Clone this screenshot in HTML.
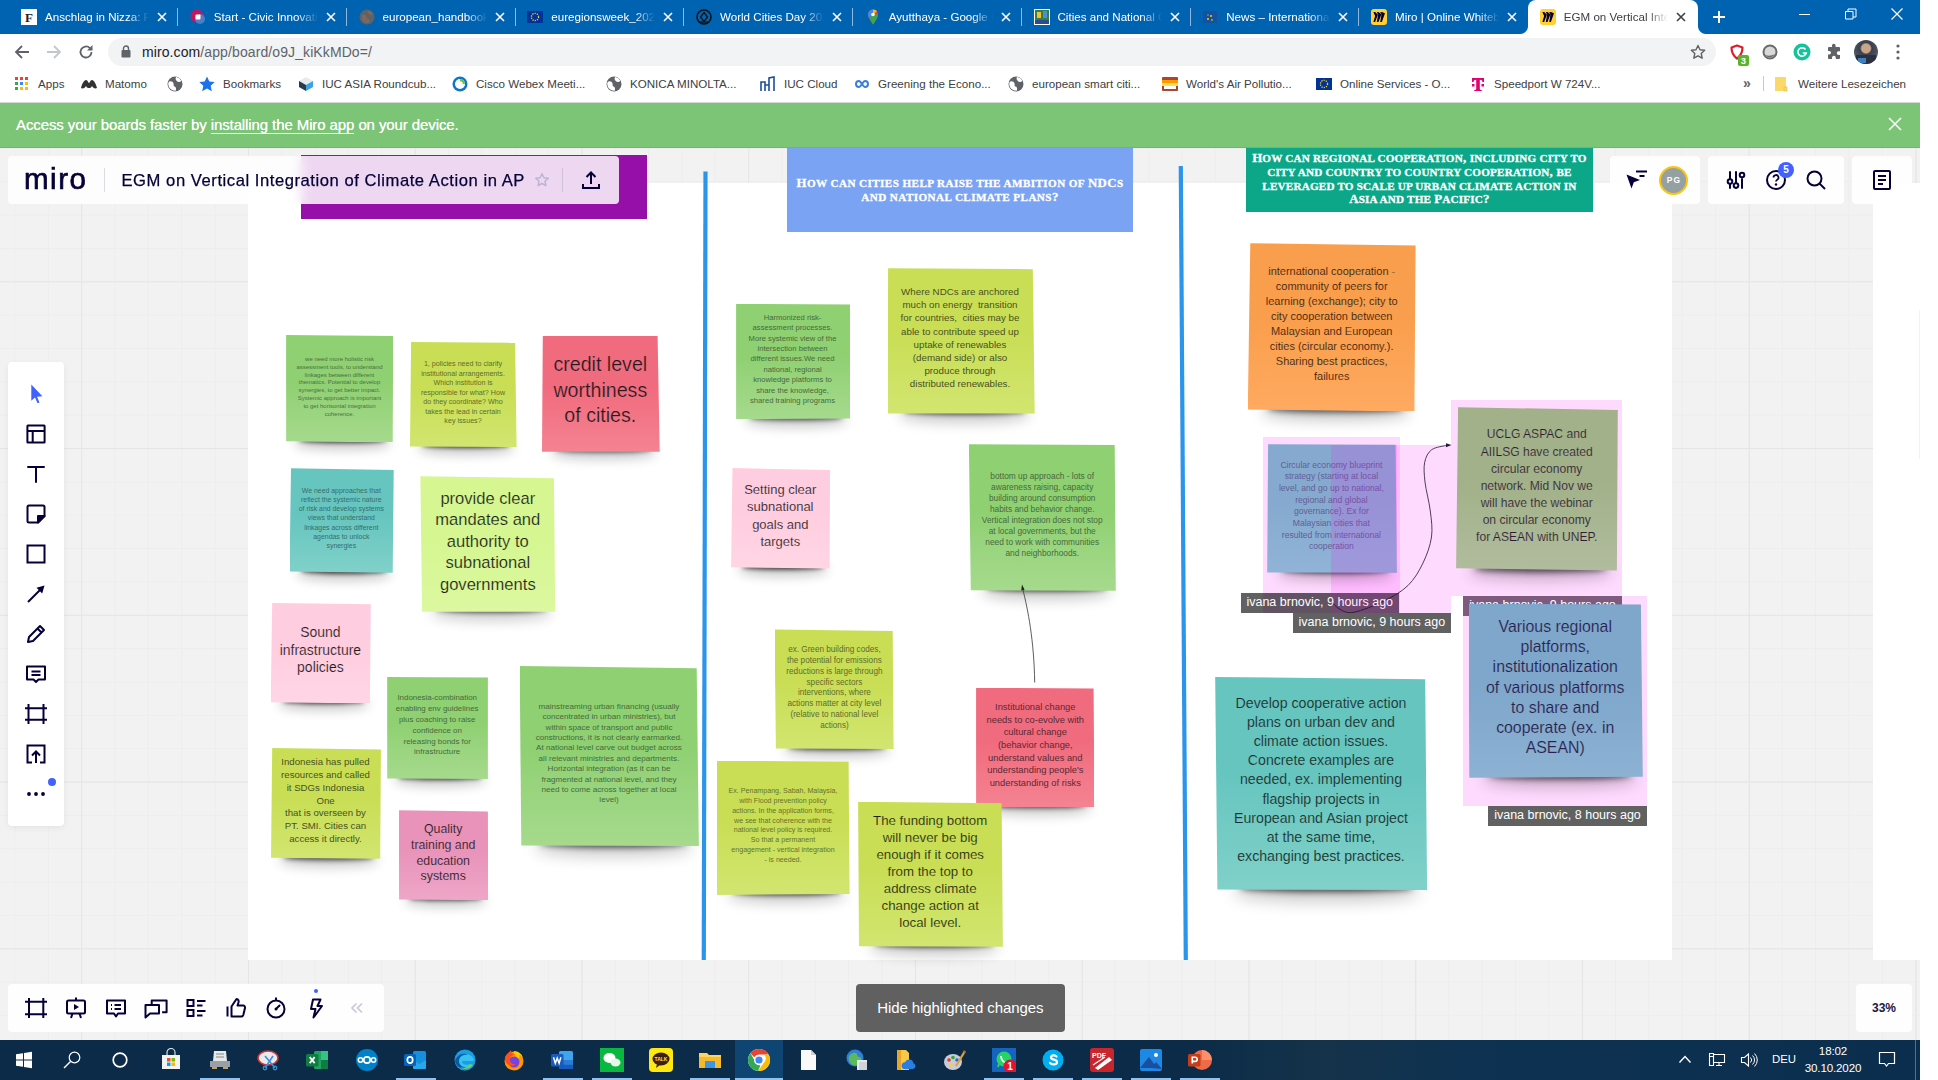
<!DOCTYPE html>
<html lang="en"><head><meta charset="utf-8"><title>EGM on Vertical Integration of Climate Action in AP</title>
<style>
*{box-sizing:border-box;margin:0;padding:0}
html,body{width:1938px;height:1080px;background:#fff;overflow:hidden}
body{font-family:"Liberation Sans",sans-serif;position:relative}
#scr{position:absolute;left:0;top:0;width:1920px;height:1080px;overflow:hidden;background:#f2f2f2}
.abs{position:absolute}
/* ---------- browser chrome ---------- */
#tabs{position:absolute;left:0;top:0;width:1920px;height:34px;background:#0063b1}
.tab{position:absolute;top:0;height:34px;width:169px;color:#fff;font-size:11.6px;line-height:34px}
.tab .ti{position:absolute;left:36px;top:0;width:104px;height:34px;overflow:hidden;white-space:nowrap;
  -webkit-mask-image:linear-gradient(90deg,#000 80%,transparent 100%);mask-image:linear-gradient(90deg,#000 80%,transparent 100%)}
.tab .fv{position:absolute;left:12px;top:9px;width:16px;height:16px}
.tab .cl{position:absolute;left:147px;top:11px;width:12px;height:12px}
.tab .sep{position:absolute;left:168px;top:8px;width:1px;height:18px;background:#8fb8dc}
.tab.act{background:#fff;color:#3c4043;border-radius:8px 8px 0 0;top:0px}
.tab.act:before,.tab.act:after{content:'';position:absolute;bottom:0;width:8px;height:8px}
.tab.act:before{left:-8px;background:radial-gradient(circle at 0 0,transparent 7.5px,#fff 8.5px)}
.tab.act:after{right:-8px;background:radial-gradient(circle at 100% 0,transparent 7.5px,#fff 8.5px)}
#tbar{position:absolute;left:0;top:34px;width:1920px;height:36px;background:#fff}
#pill{position:absolute;left:108px;top:4px;width:1608px;height:28px;border-radius:14px;background:#f1f3f4}
#url{position:absolute;left:142px;top:0;height:36px;line-height:36px;font-size:14px;color:#202124;white-space:nowrap;letter-spacing:0.1px}
#url span{color:#5f6368}
#bm{position:absolute;left:0;top:69px;width:1920px;height:34px;background:#fff;border-bottom:1px solid #d6d6d6;font-size:11.6px;color:#3c4043}
#bm .b{position:absolute;top:0;height:29px;line-height:29px;white-space:nowrap}
#bm .i{position:absolute;top:7px;width:16px;height:16px}
#banner{position:absolute;left:0;top:103px;width:1920px;height:45px;background:#7cc576;border-bottom:1px solid #6fb86a;color:#fff;font-size:15px;line-height:44px}
#banner .t{position:absolute;left:16px;top:0px;white-space:nowrap;letter-spacing:-0.1px;text-shadow:0 0 0.6px #fff}
#banner u{text-decoration:none;border-bottom:1px solid #fff;padding-bottom:0px}
/* ---------- canvas ---------- */
#cv{position:absolute;left:0;top:148px;width:1920px;height:892px;overflow:hidden;background-color:#f2f2f2;
 background-image:
  linear-gradient(90deg,#e5e5e5 1px,transparent 1px),
  linear-gradient(180deg,#e5e5e5 1px,transparent 1px),
  linear-gradient(90deg,#ededed 1px,transparent 1px),
  linear-gradient(180deg,#ededed 1px,transparent 1px);
 background-size:166.77px 166.77px,166.77px 166.77px,33.354px 33.354px,33.354px 33.354px;
 background-position:81.2px 0,0 133.3px,81.2px 0,0 133.3px}
#cv>.in{position:absolute;left:0;top:-148px;width:1920px;height:1080px}
.frame{position:absolute;background:#fff}
.hdr{position:absolute;color:#fff;font-family:"Liberation Serif",serif;font-weight:bold;text-align:center;white-space:nowrap}
.hdr .c{position:absolute;left:0;right:0;text-align:center}
.sc{font-size:87%;line-height:0}
.nt{position:absolute}
.nt .bd{position:absolute;left:0;top:0;right:0;bottom:0;clip-path:polygon(0 0,100% 1px,100% 100%,0 100%)}
.nt .sh{position:absolute;left:12%;right:7%;bottom:4px;height:6px;box-shadow:0 4px 6px 1px rgba(0,0,0,.6),0 8px 14px 6px rgba(0,0,0,.22);border-radius:45%;background:rgba(0,0,0,.5)}
.nt .tx{position:absolute;width:300px;text-align:center;white-space:nowrap}
.hl{position:absolute;background:rgba(255,70,255,.2)}
.lbl{position:absolute;height:20px;background:rgba(0,0,0,.62);color:#fff;font-size:12.5px;line-height:19px;white-space:nowrap;text-align:center}
/* ---------- miro ui ---------- */
.pn{position:absolute;background:rgba(255,255,255,.9);border-radius:4px}
.ic{position:absolute;width:24px;height:24px}
.ic svg{width:24px;height:24px;display:block}
#title{position:absolute;left:121.5px;top:157px;height:48px;line-height:48px;font-size:16.6px;color:#050038;white-space:nowrap;letter-spacing:0.55px;-webkit-text-stroke:.25px #050038}
/* ---------- taskbar ---------- */
#task{position:absolute;left:0;top:1040px;width:1920px;height:40px;background:linear-gradient(90deg,#0b2b48 0,#0b2b48 62%,#15334a 69%,#0e3251 76%,#0b2e4e 100%)}
.tk{position:absolute;top:8px;width:24px;height:24px}
.ul{position:absolute;top:38px;height:2px;width:40px;background:#8fc3ee}
</style></head>
<body>
<div id="scr">
<div id="cv"><div class="in"><div class="frame" style="left:248px;top:183px;width:1423.500px;height:777px"></div><div class="frame" style="left:1873px;top:183px;width:47px;height:777px"></div><div class="abs" style="left:1919px;top:310px;width:1px;height:149px;background:#fff6b8"></div><div class="abs" style="left:300.500px;top:155px;width:346.500px;height:63.500px;background:#960fa8"></div><div class="hdr" style="left:787px;top:148px;width:346px;height:84px;background:#7ba3f3;font-size:12.800px;line-height:14.200px;letter-spacing:.42px;-webkit-text-stroke:.3px #fff"><div class="c" style="top:27.500px">H<span class="sc">OW CAN CITIES HELP RAISE THE AMBITION OF </span>NDC<span class="sc">S</span><br><span class="sc">AND NATIONAL CLIMATE PLANS</span>?</div></div><div class="hdr" style="left:1246px;top:148px;width:346.800px;height:63.700px;background:#0ca789;font-size:12.800px;line-height:13.600px;letter-spacing:.2px;-webkit-text-stroke:.3px #fff"><div class="c" style="top:4.400px">H<span class="sc">OW CAN REGIONAL COOPERATION</span>, <span class="sc">INCLUDING CITY TO</span><br><span class="sc">CITY AND COUNTRY TO COUNTRY COOPERATION</span>, <span class="sc">BE</span><br><span class="sc">LEVERAGED TO SCALE UP URBAN CLIMATE ACTION IN</span><br>A<span class="sc">SIA AND THE </span>P<span class="sc">ACIFIC</span>?</div></div><svg class="abs" style="left:0;top:0" width="1920" height="1080"><path d="M705.500 171.500L703.800 960" stroke="#2b95ec" stroke-width="4.200"/><path d="M1180.800 166L1185.800 960" stroke="#2b95ec" stroke-width="4.200"/></svg><div class="hl" style="left:1263px;top:437px;width:136.700px;height:176px"></div><div class="hl" style="left:1331px;top:444.700px;width:120px;height:168.300px"></div><div class="hl" style="left:1451px;top:400px;width:171px;height:195.500px"></div><div class="hl" style="left:1463px;top:595.500px;width:184px;height:210.500px"></div><div class="lbl" style="left:1463px;top:595.500px;width:159px;background:#7d5a7e">ivana brnovic, 9 hours ago</div><div class="nt" id="L1" style="left:286.1px;top:335.0px;width:107.1px;height:107.4px"><div class="sh" style="bottom:3.2px;height:4.7px;box-shadow:0 3.2px 4.7px 0.8px rgba(0,0,0,.72),0 6.3px 11.1px 4.7px rgba(0,0,0,.2)"></div><div class="bd" style="background:linear-gradient(180deg,#8fd072 0%,#8fd072 45%,#a6da8d 100%);clip-path:polygon(0.0px 0.0px,107.1px 1.1px,106.6px 107.4px,0.0px 106.3px)"></div><div class="tx" style="left:-96.6px;top:20.87px;font-size:5.99px;line-height:7.86px;color:#4b6f41">we need more holistic risk<br>assessment tools, to understand<br>linkages between different<br>thematics. Potential to develop<br>synergies, to get better impact.<br>Systemic approach is important<br>to get horisontal integration<br>coherence.</div></div>
<div class="nt" id="L2" style="left:410.0px;top:342.0px;width:106.6px;height:105.0px"><div class="sh" style="bottom:3.2px;height:4.7px;box-shadow:0 3.2px 4.7px 0.8px rgba(0,0,0,.72),0 6.3px 11.0px 4.7px rgba(0,0,0,.2)"></div><div class="bd" style="background:linear-gradient(180deg,#c9de55 0%,#c9de55 45%,#d2e570 100%);clip-path:polygon(1.1px 0.0px,105.1px 0.8px,106.6px 105.0px,0.0px 104.5px)"></div><div class="tx" style="left:-97.0px;top:18.47px;font-size:7.15px;line-height:9.46px;color:#616e2a">1, policies need to clarify<br>institutional arrangements.<br>Which institution is<br>responsible for what? How<br>do they coordinate? Who<br>takes the lead in certain<br>key issues?</div></div>
<div class="nt" id="L3" style="left:542.0px;top:336.1px;width:117.7px;height:115.6px"><div class="sh" style="bottom:3.3px;height:5.0px;box-shadow:0 3.3px 5.0px 0.8px rgba(0,0,0,.72),0 6.6px 11.6px 5.0px rgba(0,0,0,.2)"></div><div class="bd" style="background:linear-gradient(180deg,#f16b7e 0%,#f16b7e 45%,#f48391 100%);clip-path:polygon(0.8px 0.0px,115.6px 0.0px,117.7px 115.6px,0.0px 115.6px)"></div><div class="tx" style="left:-91.7px;top:16.00px;font-size:19.64px;line-height:25.60px;color:#221a1e;-webkit-text-stroke:0.24px #f27284">credit level<br>worthiness<br>of cities.</div></div>
<div class="nt" id="L4" style="left:289.5px;top:468.3px;width:104.2px;height:104.5px"><div class="sh" style="bottom:3.1px;height:4.7px;box-shadow:0 3.1px 4.7px 0.8px rgba(0,0,0,.72),0 6.2px 10.9px 4.7px rgba(0,0,0,.2)"></div><div class="bd" style="background:linear-gradient(180deg,#66c5bf 0%,#66c5bf 45%,#80d1c9 100%);clip-path:polygon(1.5px 0.0px,104.2px 1.6px,103.2px 104.5px,0.0px 103.2px)"></div><div class="tx" style="left:-98.2px;top:17.72px;font-size:6.91px;line-height:9.16px;color:#366d6b">We need approaches that<br>reflect the systemic nature<br>of risk and develop systems<br>views that understand<br>linkages across different<br>agendas to unlock<br>synergies</div></div>
<div class="nt" id="L5" style="left:420.4px;top:476.3px;width:134.9px;height:135.5px"><div class="sh" style="bottom:3.5px;height:5.3px;box-shadow:0 3.5px 5.3px 0.9px rgba(0,0,0,.72),0 7.1px 12.4px 5.3px rgba(0,0,0,.2)"></div><div class="bd" style="background:linear-gradient(180deg,#d5f691 0%,#d5f691 45%,#dcf8a0 100%);clip-path:polygon(0.0px 0.0px,133.5px 1.9px,134.9px 135.5px,1.7px 135.5px)"></div><div class="tx" style="left:-82.6px;top:11.70px;font-size:16.57px;line-height:21.40px;color:#1c2015;-webkit-text-stroke:0.20px #d7f796">provide clear<br>mandates and<br>authority to<br>subnational<br>governments</div></div>
<div class="nt" id="L6" style="left:270.7px;top:603.0px;width:100.1px;height:100.4px"><div class="sh" style="bottom:3.1px;height:4.6px;box-shadow:0 3.1px 4.6px 0.8px rgba(0,0,0,.72),0 6.1px 10.7px 4.6px rgba(0,0,0,.2)"></div><div class="bd" style="background:linear-gradient(180deg,#ffcddf 0%,#ffcddf 45%,#ffd6e5 100%);clip-path:polygon(1.5px 0.0px,100.1px 1.2px,99.2px 100.4px,0.0px 99.2px)"></div><div class="tx" style="left:-100.3px;top:21.45px;font-size:13.97px;line-height:17.50px;color:#221b20;-webkit-text-stroke:0.17px #ffd0e1">Sound<br>infrastructure<br>policies</div></div>
<div class="nt" id="L7" style="left:387.2px;top:677.0px;width:100.7px;height:102.0px"><div class="sh" style="bottom:3.1px;height:4.6px;box-shadow:0 3.1px 4.6px 0.8px rgba(0,0,0,.72),0 6.1px 10.7px 4.6px rgba(0,0,0,.2)"></div><div class="bd" style="background:linear-gradient(180deg,#8fd072 0%,#8fd072 45%,#a6da8d 100%);clip-path:polygon(0.0px 0.0px,100.7px 0.6px,100.7px 102.0px,0.0px 101.4px)"></div><div class="tx" style="left:-100.0px;top:16.18px;font-size:7.92px;line-height:10.84px;color:#476b3b">Indonesia-combination<br>enabling env guidelines<br>plus coaching to raise<br>confidence on<br>releasing bonds for<br>infrastructure</div></div>
<div class="nt" id="L8" style="left:519.7px;top:666.0px;width:179.2px;height:180.1px"><div class="sh" style="bottom:4.2px;height:6.2px;box-shadow:0 4.2px 6.2px 1.0px rgba(0,0,0,.72),0 8.3px 14.5px 6.2px rgba(0,0,0,.2)"></div><div class="bd" style="background:linear-gradient(180deg,#8fd072 0%,#8fd072 45%,#a6da8d 100%);clip-path:polygon(0.0px 0.0px,177.0px 2.2px,179.2px 180.1px,1.6px 179.4px)"></div><div class="tx" style="left:-60.7px;top:35.70px;font-size:8.10px;line-height:10.40px;color:#476b3b">mainstreaming urban financing (usually<br>concentrated in urban ministries), but<br>within space of transport and public<br>constructions, it is not clearly earmarked.<br>At national level carve out budget across<br>all relevant ministries and departments.<br>Horizontal integration (as it can be<br>fragmented at national level, and they<br>need to come across together at local<br>level)</div></div>
<div class="nt" id="L9" style="left:271.0px;top:748.1px;width:109.9px;height:110.6px"><div class="sh" style="bottom:3.2px;height:4.8px;box-shadow:0 3.2px 4.8px 0.8px rgba(0,0,0,.72),0 6.4px 11.2px 4.8px rgba(0,0,0,.2)"></div><div class="bd" style="background:linear-gradient(180deg,#c9de55 0%,#c9de55 45%,#d2e570 100%);clip-path:polygon(1.2px 0.0px,109.9px 1.3px,109.2px 110.6px,0.0px 109.6px)"></div><div class="tx" style="left:-95.5px;top:7.98px;font-size:9.64px;line-height:12.85px;color:#495220">Indonesia has pulled<br>resources and called<br>it SDGs Indonesia<br>One<br>that is overseen by<br>PT. SMI. Cities can<br>access it directly.</div></div>
<div class="nt" id="L10" style="left:398.5px;top:810.2px;width:89.7px;height:90.0px"><div class="sh" style="bottom:2.9px;height:4.4px;box-shadow:0 2.9px 4.4px 0.7px rgba(0,0,0,.72),0 5.8px 10.2px 4.4px rgba(0,0,0,.2)"></div><div class="bd" style="background:linear-gradient(180deg,#e993ba 0%,#e993ba 45%,#eea6c7 100%);clip-path:polygon(0.0px 0.0px,89.4px 1.2px,89.7px 90.0px,0.6px 89.4px)"></div><div class="tx" style="left:-105.3px;top:12.30px;font-size:12.34px;line-height:15.60px;color:#22191e;-webkit-text-stroke:0.15px #ea99be">Quality<br>training and<br>education<br>systems</div></div>
<div class="nt" id="M1" style="left:736.1px;top:303.9px;width:114.2px;height:115.3px"><div class="sh" style="bottom:3.3px;height:4.9px;box-shadow:0 3.3px 4.9px 0.8px rgba(0,0,0,.72),0 6.5px 11.4px 4.9px rgba(0,0,0,.2)"></div><div class="bd" style="background:linear-gradient(180deg,#8fd072 0%,#8fd072 45%,#a6da8d 100%);clip-path:polygon(0.0px 0.0px,113.9px 0.5px,114.2px 114.7px,0.0px 115.3px)"></div><div class="tx" style="left:-93.6px;top:8.89px;font-size:7.65px;line-height:10.42px;color:#476b3b">Harmonized risk-<br>assessment processes.<br>More systemic view of the<br>intersection between<br>different issues.We need<br>national, regional<br>knowledge platforms to<br>share the knowledge,<br>shared training programs</div></div>
<div class="nt" id="M2" style="left:887.5px;top:268.3px;width:147.2px;height:145.3px"><div class="sh" style="bottom:3.7px;height:5.6px;box-shadow:0 3.7px 5.6px 0.9px rgba(0,0,0,.72),0 7.4px 13.0px 5.6px rgba(0,0,0,.2)"></div><div class="bd" style="background:linear-gradient(180deg,#c9de55 0%,#c9de55 45%,#d2e570 100%);clip-path:polygon(0.6px 0.0px,145.3px 0.9px,147.2px 145.3px,0.0px 145.3px)"></div><div class="tx" style="left:-77.5px;top:16.83px;font-size:9.77px;line-height:13.13px;color:#495220">Where NDCs are anchored<br>much on energy  transition<br>for countries,  cities may be<br>able to contribute speed up<br>uptake of renewables<br>(demand side) or also<br>produce through<br>distributed renewables.</div></div>
<div class="nt" id="M3" style="left:731.1px;top:468.1px;width:98.9px;height:100.5px"><div class="sh" style="bottom:3.0px;height:4.6px;box-shadow:0 3.0px 4.6px 0.8px rgba(0,0,0,.72),0 6.1px 10.7px 4.6px rgba(0,0,0,.2)"></div><div class="bd" style="background:linear-gradient(180deg,#ffcddf 0%,#ffcddf 45%,#ffd6e5 100%);clip-path:polygon(1.4px 0.0px,98.9px 1.9px,98.6px 100.5px,0.0px 99.1px)"></div><div class="tx" style="left:-100.8px;top:12.58px;font-size:12.99px;line-height:17.43px;color:#221b20;-webkit-text-stroke:0.16px #ffd0e1">Setting clear<br>subnational<br>goals and<br>targets</div></div>
<div class="nt" id="M4" style="left:968.9px;top:444.2px;width:146.9px;height:146.6px"><div class="sh" style="bottom:3.7px;height:5.6px;box-shadow:0 3.7px 5.6px 0.9px rgba(0,0,0,.72),0 7.4px 13.0px 5.6px rgba(0,0,0,.2)"></div><div class="bd" style="background:linear-gradient(180deg,#8fd072 0%,#8fd072 45%,#a6da8d 100%);clip-path:polygon(0.0px 0.0px,145.8px 0.8px,146.9px 146.6px,1.9px 146.1px)"></div><div class="tx" style="left:-76.7px;top:26.39px;font-size:8.34px;line-height:11.03px;color:#476b3b">bottom up approach - lots of<br>awareness raising, capacity<br>building around consumption<br>habits and behavior change.<br>Vertical integration does not stop<br>at local governments, but the<br>need to work with communities<br>and neighborhoods.</div></div>
<div class="nt" id="M5" style="left:774.6px;top:629.4px;width:119.0px;height:119.7px"><div class="sh" style="bottom:3.3px;height:5.0px;box-shadow:0 3.3px 5.0px 0.8px rgba(0,0,0,.72),0 6.6px 11.6px 5.0px rgba(0,0,0,.2)"></div><div class="bd" style="background:linear-gradient(180deg,#c9de55 0%,#c9de55 45%,#d2e570 100%);clip-path:polygon(0.0px 0.0px,118.1px 1.6px,119.0px 119.7px,1.3px 119.1px)"></div><div class="tx" style="left:-90.2px;top:15.68px;font-size:8.17px;line-height:10.84px;color:#5f6c29">ex. Green building codes,<br>the potential for emissions<br>reductions is large through<br>specific sectors<br>interventions, where<br>actions matter at city level<br>(relative to national level<br>actions)</div></div>
<div class="nt" id="M6" style="left:976.1px;top:687.7px;width:118.4px;height:119.6px"><div class="sh" style="bottom:3.3px;height:5.0px;box-shadow:0 3.3px 5.0px 0.8px rgba(0,0,0,.72),0 6.6px 11.6px 5.0px rgba(0,0,0,.2)"></div><div class="bd" style="background:linear-gradient(180deg,#f16b7e 0%,#f16b7e 45%,#f48391 100%);clip-path:polygon(0.0px 0.0px,117.5px 0.9px,118.4px 119.6px,0.0px 119.3px)"></div><div class="tx" style="left:-90.8px;top:13.25px;font-size:9.34px;line-height:12.70px;color:#5b2933">Institutional change<br>needs to co-evolve with<br>cultural change<br>(behavior change,<br>understand values and<br>understanding people's<br>understanding of risks</div></div>
<div class="nt" id="M7" style="left:716.7px;top:760.7px;width:132.9px;height:134.2px"><div class="sh" style="bottom:3.5px;height:5.3px;box-shadow:0 3.5px 5.3px 0.9px rgba(0,0,0,.72),0 7.0px 12.3px 5.3px rgba(0,0,0,.2)"></div><div class="bd" style="background:linear-gradient(180deg,#c9de55 0%,#c9de55 45%,#d2e570 100%);clip-path:polygon(0.0px 0.0px,131.9px 1.0px,132.9px 133.2px,0.0px 134.2px)"></div><div class="tx" style="left:-83.7px;top:26.27px;font-size:7.10px;line-height:9.86px;color:#67732b">Ex. Penampang, Sabah, Malaysia,<br>with Flood prevention policy<br>actions. In the application forms,<br>we see that coherence with the<br>national level policy is required.<br>So that a permanent<br>engagement - vertical integration<br>- is needed.</div></div>
<div class="nt" id="M8" style="left:858.1px;top:801.7px;width:144.8px;height:145.1px"><div class="sh" style="bottom:3.7px;height:5.5px;box-shadow:0 3.7px 5.5px 0.9px rgba(0,0,0,.72),0 7.4px 12.9px 5.5px rgba(0,0,0,.2)"></div><div class="bd" style="background:linear-gradient(180deg,#c9de55 0%,#c9de55 45%,#d2e570 100%);clip-path:polygon(0.0px 0.0px,143.5px 1.6px,144.8px 145.1px,0.9px 144.5px)"></div><div class="tx" style="left:-77.9px;top:10.38px;font-size:13.26px;line-height:17.05px;color:#1c200c;-webkit-text-stroke:0.16px #cce05d">The funding bottom<br>will never be big<br>enough if it comes<br>from the top to<br>address climate<br>change action at<br>local level.</div></div>
<div class="nt" id="R1" style="left:1247.8px;top:243.3px;width:167.8px;height:168.1px"><div class="sh" style="bottom:4.0px;height:6.0px;box-shadow:0 4.0px 6.0px 1.0px rgba(0,0,0,.72),0 8.0px 14.0px 6.0px rgba(0,0,0,.2)"></div><div class="bd" style="background:linear-gradient(180deg,#f99e4c 0%,#f99e4c 45%,#ffaa60 100%);clip-path:polygon(2.5px 0.0px,167.8px 2.3px,166.6px 168.1px,0.0px 166.1px)"></div><div class="tx" style="left:-66.1px;top:20.30px;font-size:10.99px;line-height:15.00px;color:#2e1d0d;-webkit-text-stroke:0.13px #fba252">international cooperation -<br>community of peers for<br>learning (exchange); city to<br>city cooperation between<br>Malaysian and European<br>cities (circular economy.).<br>Sharing best practices,<br>failures</div></div>
<div class="nt" id="R2" style="left:1267.2px;top:444.2px;width:129.7px;height:128.6px"><div class="sh" style="bottom:3.5px;height:5.2px;box-shadow:0 3.5px 5.2px 0.9px rgba(0,0,0,.72),0 6.9px 12.1px 5.2px rgba(0,0,0,.2)"></div><div class="bd" style="background:linear-gradient(180deg,#86aacf 0%,#86aacf 45%,#90b3d7 100%);clip-path:polygon(0.9px 0.0px,128.4px 0.5px,129.7px 128.6px,0.0px 128.3px)"></div><div class="tx" style="left:-85.8px;top:15.35px;font-size:8.58px;line-height:11.70px;color:#625e96">Circular economy blueprint<br>strategy (starting at local<br>level, and go up to national,<br>regional and global<br>governance). Ex for<br>Malaysian cities that<br>resulted from international<br>cooperation</div></div>
<div class="nt" id="R3" style="left:1456.1px;top:407.2px;width:161.7px;height:163.4px"><div class="sh" style="bottom:3.9px;height:5.9px;box-shadow:0 3.9px 5.9px 1.0px rgba(0,0,0,.72),0 7.8px 13.7px 5.9px rgba(0,0,0,.2)"></div><div class="bd" style="background:linear-gradient(180deg,#a2b189 0%,#a2b189 45%,#b1bc9e 100%);clip-path:polygon(2.0px 0.0px,161.7px 2.8px,160.8px 163.4px,0.0px 161.1px)"></div><div class="tx" style="left:-69.4px;top:19.24px;font-size:12.09px;line-height:17.13px;color:#2e1d33;-webkit-text-stroke:0.15px #a6b48f">UCLG ASPAC and<br>AIILSG have created<br>circular economy<br>network. Mid Nov we<br>will have the webinar<br>on circular economy<br>for ASEAN with UNEP.</div></div>
<div class="nt" id="R4" style="left:1468.6px;top:603.6px;width:174.2px;height:174.1px"><div class="sh" style="bottom:4.1px;height:6.1px;box-shadow:0 4.1px 6.1px 1.0px rgba(0,0,0,.72),0 8.2px 14.3px 6.1px rgba(0,0,0,.2)"></div><div class="bd" style="background:linear-gradient(180deg,#7ea7cb 0%,#7ea7cb 45%,#8cb1d3 100%);clip-path:polygon(0.0px 0.0px,172.3px 1.0px,174.2px 173.2px,0.7px 174.1px)"></div><div class="tx" style="left:-63.4px;top:13.17px;font-size:15.87px;line-height:20.25px;color:#29204b;-webkit-text-stroke:0.19px #82aacd">Various regional<br>platforms,<br>institutionalization<br>of various platforms<br>to share and<br>cooperate (ex. in<br>ASEAN)</div></div>
<div class="nt" id="R5" style="left:1215.2px;top:677.0px;width:211.9px;height:213.1px"><div class="sh" style="bottom:4.6px;height:6.9px;box-shadow:0 4.6px 6.9px 1.2px rgba(0,0,0,.72),0 9.2px 16.1px 6.9px rgba(0,0,0,.2)"></div><div class="bd" style="background:linear-gradient(180deg,#66c5bf 0%,#66c5bf 45%,#80d1c9 100%);clip-path:polygon(0.0px 0.0px,210.0px 2.2px,211.9px 213.1px,2.2px 212.5px)"></div><div class="tx" style="left:-44.2px;top:17.05px;font-size:14.16px;line-height:19.10px;color:#192a28;-webkit-text-stroke:0.17px #6ec9c2">Develop cooperative action<br>plans on urban dev and<br>climate action issues.<br>Concrete examples are<br>needed, ex. implementing<br>flagship projects in<br>European and Asian project<br>at the same time,<br>exchanging best practices.</div></div><div class="hl" style="left:1331px;top:444.700px;width:66.300px;height:128.100px;background:rgba(255,0,255,.14)"></div><svg class="abs" style="left:0;top:0" width="1920" height="1080" fill="none"><path d="M1034.700 682.500C1034 640 1028 610 1022.500 588" stroke="#333" stroke-width=".800"/><path d="M1022 584.500l2.600 5.200-3.400 .8z" fill="#222"/><path d="M1331.1 601.1C1332.6 602.5 1336.2 607.5 1340.0 609.4C1343.8 611.2 1346.7 613.6 1354.0 612.2C1361.3 610.8 1375.0 605.5 1384.0 601.0C1393.0 596.5 1401.5 591.8 1408.0 585.5C1414.5 579.2 1419.1 571.1 1423.0 563.0C1426.9 554.9 1430.3 545.7 1431.5 537.0C1432.7 528.3 1431.4 520.2 1430.3 511.0C1429.2 501.8 1425.9 490.1 1425.0 482.0C1424.1 473.9 1423.6 467.6 1424.7 462.2C1425.8 456.8 1428.0 452.5 1431.7 449.7C1435.4 446.9 1444.5 446.0 1447.0 445.3" stroke="#3a2a4a" stroke-width=".900"/><path d="M1451.500 445l-5.500 2.200 0-4z" fill="#2a1a3a"/></svg><div class="lbl" style="left:1240.500px;top:593.300px;width:158.500px">ivana brnovic, 9 hours ago</div><div class="hl" style="left:1331px;top:593.300px;width:68px;height:19.700px;background:rgba(255,90,255,.1)"></div><div class="lbl" style="left:1292.800px;top:613px;width:158.200px">ivana brnovic, 9 hours ago</div><div class="lbl" style="left:1488px;top:806px;width:159px">ivana brnovic, 8 hours ago</div></div></div>
<div class="pn" style="left:8px;top:156px;width:611px;height:48px;backdrop-filter:blur(6px);background:rgba(255,255,255,.84)"></div><div class="abs" style="left:24px;top:156px;height:48px;line-height:45px;font-size:29.500px;color:#050038;letter-spacing:1.500px;-webkit-text-stroke:.700px #050038">miro</div><div class="abs" style="left:104px;top:168px;width:1px;height:24px;background:#dcdce3"></div><div id="title">EGM on Vertical Integration of Climate Action in AP</div><svg class="abs" style="left:534px;top:172px" width="16" height="16" viewBox="0 0 16 16"><path d="M8 1.800l1.900 4 4.400.5-3.300 3 .9 4.400L8 11.500l-3.900 2.200.9-4.400-3.300-3 4.400-.5z" stroke="#b9b4d6" stroke-width="1.500" fill="none" stroke-linejoin="round"/></svg><div class="abs" style="left:562px;top:168px;width:1px;height:24px;background:#cfc3dc"></div><div class="ic" style="left:579px;top:168px"><svg viewBox="0 0 24 24" fill="none" stroke="#050038" stroke-width="2"><path d="M12 16V4.500M7.500 9L12 4.500 16.500 9M4 16v4h16v-4"/></svg></div><div class="pn" style="left:1610px;top:156px;width:90px;height:48px"></div><div class="pn" style="left:1708px;top:156px;width:136px;height:48px"></div><div class="pn" style="left:1852px;top:156px;width:60px;height:48px"></div><svg class="abs" style="left:1624px;top:168px" width="26" height="24" viewBox="0 0 26 24"><path d="M2.500 6.500l5 14 2.300-6.200 6.200-2.300z" fill="#050038"/><path d="M12 3.500h11M15.500 8h5" stroke="#050038" stroke-width="1.800"/></svg><div class="abs" style="left:1659px;top:166px;width:29px;height:29px;border-radius:15px;background:#95a0a2;border:2.500px solid #fac710;color:#fff;font-size:8.500px;font-weight:bold;line-height:24px;text-align:center;letter-spacing:1px;text-indent:1px">PG</div><div class="ic" style="left:1724px;top:168px"><svg viewBox="0 0 24 24" fill="none" stroke="#050038" stroke-width="2"><path d="M6 4v7M6 16v4M12 4v11M12 20v0M18 11v9" stroke-linecap="round"/><circle cx="6" cy="13.500" r="2.300"/><circle cx="12" cy="17.500" r="2.300"/><circle cx="18" cy="7" r="2.300"/></svg></div><div class="ic" style="left:1764px;top:168px"><svg viewBox="0 0 24 24" fill="none" stroke="#050038" stroke-width="2"><circle cx="12" cy="12" r="9"/><path d="M9.500 9.500a2.500 2.500 0 1 1 3.700 2.200c-.9.500-1.200 1-1.200 1.900" stroke-width="1.800"/><circle cx="12" cy="16.500" r="1.200" fill="#050038" stroke="none"/></svg></div><div class="abs" style="left:1778px;top:162px;width:16px;height:16px;border-radius:8px;background:#4262ff;color:#fff;font-size:10px;font-weight:bold;line-height:16px;text-align:center">5</div><div class="ic" style="left:1804px;top:168px"><svg viewBox="0 0 24 24" fill="none" stroke="#050038" stroke-width="2"><circle cx="10.500" cy="10.500" r="7"/><path d="M15.500 15.500L21 21"/></svg></div><div class="ic" style="left:1870px;top:168px"><svg viewBox="0 0 24 24" fill="none" stroke="#050038" stroke-width="2"><rect x="4" y="3" width="16" height="18" rx="1"/><path d="M8 8h8M8 12h8M8 16h5" stroke-width="1.800"/></svg></div><div class="pn" style="left:8px;top:362px;width:56px;height:464px;background:#fff;box-shadow:0 2px 6px rgba(5,0,56,.06)"></div><svg class="abs" style="left:24px;top:382px" width="24" height="24" viewBox="0 0 24 24"><path d="M7.300 2.400v16.300l3.700-3.200 2.500 5.800 2-.9-2.500-5.600 5.400-.6z" fill="#4262ff"/></svg><div class="ic" style="left:24px;top:422px"><svg viewBox="0 0 24 24" fill="none" stroke="#050038" stroke-width="2"><rect x="3.400" y="3.400" width="17.200" height="17.200" rx=".5"/><path d="M3.400 9h17.200M8.700 9v11.600"/></svg></div><div class="ic" style="left:24px;top:462px"><svg viewBox="0 0 24 24" fill="none" stroke="#050038" stroke-width="2"><path d="M4 5h16M12 5v15" stroke-linecap="round"/></svg></div><div class="ic" style="left:24px;top:502px"><svg viewBox="0 0 24 24" fill="none" stroke="#050038" stroke-width="2"><path d="M3.500 5a1.500 1.500 0 0 1 1.500-1.500h14a1.500 1.500 0 0 1 1.500 1.500v9l-6.500 6.500H5a1.500 1.500 0 0 1-1.500-1.500z"/><path d="M20.500 14h-6.500v6.500z" fill="#050038" stroke-linejoin="round"/></svg></div><div class="ic" style="left:24px;top:542px"><svg viewBox="0 0 24 24" fill="none" stroke="#050038" stroke-width="2"><rect x="3.500" y="3.500" width="17" height="17"/></svg></div><div class="ic" style="left:24px;top:582px"><svg viewBox="0 0 24 24" fill="none" stroke="#050038" stroke-width="2"><path d="M4 20L17 7"/><path d="M20.500 3.500l-2.300 8-5.700-5.700z" fill="#050038" stroke="none"/></svg></div><div class="ic" style="left:24px;top:622px"><svg viewBox="0 0 24 24" fill="none" stroke="#050038" stroke-width="2"><path d="M4 20l1-5L16 4l4 4L9 19zM13.500 6.500l4 4" stroke-linejoin="round"/></svg></div><div class="ic" style="left:24px;top:662px"><svg viewBox="0 0 24 24" fill="none" stroke="#050038" stroke-width="2"><path d="M3 4.500h18v13h-6.500L12 20l-2.500-2.500H3z" stroke-linejoin="round"/><path d="M7.500 9.500h9M7.500 13h9" stroke-width="1.800"/></svg></div><div class="ic" style="left:24px;top:702px"><svg viewBox="0 0 24 24" fill="none" stroke="#050038" stroke-width="2"><path d="M4.500 2v20M19.500 2v20M1 6.300h22M1 17.700h22"/></svg></div><div class="ic" style="left:24px;top:742px"><svg viewBox="0 0 24 24" fill="none" stroke="#050038" stroke-width="2"><path d="M8 20.500H3.500v-17h17v17H16M12 21V9.500M8 13.500l4-4 4 4"/></svg></div><svg class="abs" style="left:24px;top:782px" width="24" height="24" viewBox="0 0 24 24"><circle cx="5" cy="12" r="1.900" fill="#050038"/><circle cx="12" cy="12" r="1.900" fill="#050038"/><circle cx="19" cy="12" r="1.900" fill="#050038"/></svg><div class="abs" style="left:48px;top:777.500px;width:8px;height:8px;border-radius:4px;background:#4262ff"></div><div class="pn" style="left:8px;top:984px;width:376px;height:48px"></div><div class="ic" style="left:24px;top:996px"><svg viewBox="0 0 24 24" fill="none" stroke="#050038" stroke-width="2"><path d="M5 2v20M19.300 2v20M1 5.800h22M1 18.200h22"/></svg></div><div class="ic" style="left:64px;top:996px"><svg viewBox="0 0 24 24" fill="none" stroke="#050038" stroke-width="2"><rect x="3" y="4.500" width="18" height="13" rx="1.500"/><path d="M12 1.500v3M7 22l1.500-4.500M17 22l-1.500-4.500"/><path d="M10 8l5 3-5 3z" fill="#050038" stroke="none"/></svg></div><div class="ic" style="left:104px;top:996px"><svg viewBox="0 0 24 24" fill="none" stroke="#050038" stroke-width="2"><path d="M3 4.500h18v13h-7L12 20.500l-2-3H3z" stroke-linejoin="round"/><path d="M7 9h1M10.500 9h6.500M7 13h1M10.500 13h6.500" stroke-width="1.800"/></svg></div><div class="ic" style="left:144px;top:996px"><svg viewBox="0 0 24 24" fill="none" stroke="#050038" stroke-width="2"><path d="M7.700 8.500V4.400h14.900v11.800h-4.500M1.500 8.900h13.500v8.600H6l-4.500 4z" stroke-linejoin="round"/></svg></div><div class="ic" style="left:184px;top:996px"><svg viewBox="0 0 24 24" fill="none" stroke="#050038" stroke-width="2"><rect x="3.500" y="4" width="6" height="6"/><rect x="3.500" y="14" width="6" height="6"/><path d="M13 5h8.500M13 9.500h5.500M13 15h8.500M13 19.500h5.500" stroke-width="1.800"/></svg></div><div class="ic" style="left:224px;top:996px"><svg viewBox="0 0 24 24" fill="none" stroke="#050038" stroke-width="2"><path d="M3.500 10.500v10M7.500 20.500V10.500L12.500 3c1.800.2 2.600 1.700 2 3.500L13.500 9.500h5.500c1.500 0 2.300 1.200 2 2.500l-1.700 7c-.3 1-1 1.500-2 1.500z" stroke-linejoin="round"/></svg></div><div class="ic" style="left:264px;top:996px"><svg viewBox="0 0 24 24" fill="none" stroke="#050038" stroke-width="2"><circle cx="12" cy="13" r="8.500"/><path d="M12 1.500v3"/><path d="M12 13l3.500-3.500" stroke-linecap="round"/><circle cx="12" cy="13" r="1.500" fill="#050038" stroke="none"/></svg></div><div class="ic" style="left:304px;top:996px"><svg viewBox="0 0 24 24" fill="none" stroke="#050038" stroke-width="2"><path d="M9 3.500h7.500l-3 6.500H18l-8.500 11.500 2-8.500H7z" stroke-linejoin="round"/></svg></div><div class="abs" style="left:314px;top:989px;width:4px;height:4px;border-radius:2px;background:#4262ff"></div><svg class="abs" style="left:350px;top:1002px" width="14" height="12" viewBox="0 0 14 12"><path d="M6.500 1.500L2 6l4.500 4.500M12 1.500L7.500 6l4.500 4.500" stroke="#c9c7dc" stroke-width="1.700" fill="none"/></svg><div class="abs" style="left:856px;top:984px;width:208.700px;height:47.500px;border-radius:4px;background:rgba(72,72,72,.86);color:#fff;font-size:15px;line-height:47px;text-align:center;letter-spacing:-.1px">Hide highlighted changes</div><div class="pn" style="left:1856px;top:984px;width:56px;height:48px;color:#1a1446;font-size:12px;font-weight:bold;line-height:48px;text-align:center">33%</div>
<div id="tabs">
<div class="tab" style="left:9.00px;"><svg class="fv" viewBox="0 0 16 16"><rect x="0" y="0" width="16" height="16" fill="#fff"/><text x="8" y="13" font-size="13" font-weight="bold" font-family="Liberation Serif" text-anchor="middle" fill="#222">F</text></svg><div class="ti">Anschlag in Nizza: Fra</div><svg class="cl" viewBox="0 0 12 12"><path d="M2 2l8 8M10 2l-8 8" stroke="#fff" stroke-width="1.6" fill="none"/></svg><div class="sep"></div></div>
<div class="tab" style="left:177.75px;"><svg class="fv" viewBox="0 0 16 16"><circle cx="7" cy="7" r="6.5" fill="#c2185b"/><circle cx="10" cy="10" r="5" fill="#4a8fd6" opacity=".8"/><rect x="5.5" y="5.5" width="5" height="5" rx="1" fill="#fff"/></svg><div class="ti">Start - Civic Innovatio</div><svg class="cl" viewBox="0 0 12 12"><path d="M2 2l8 8M10 2l-8 8" stroke="#fff" stroke-width="1.6" fill="none"/></svg><div class="sep"></div></div>
<div class="tab" style="left:346.50px;"><svg class="fv" viewBox="0 0 16 16"><circle cx="8" cy="8" r="7.5" fill="#5f6368"/><path d="M3 6c2-1 3 0 4 1s0 3 2 3 2 2 1 4c-3 1-6-1-7-3zM9 2c2 0 4 1 5 3-1 1-3 1-4 0s-2-2-1-3z" fill="#8a6a5a" opacity=".7"/></svg><div class="ti">european_handbook</div><svg class="cl" viewBox="0 0 12 12"><path d="M2 2l8 8M10 2l-8 8" stroke="#fff" stroke-width="1.6" fill="none"/></svg><div class="sep"></div></div>
<div class="tab" style="left:515.25px;"><svg class="fv" viewBox="0 0 16 16"><rect x="0" y="2" width="16" height="12" fill="#003399"/><circle cx="8" cy="8" r="3.6" fill="none" stroke="#fc0" stroke-width="1.3" stroke-dasharray="1.2 1.1"/></svg><div class="ti">euregionsweek_2020</div><svg class="cl" viewBox="0 0 12 12"><path d="M2 2l8 8M10 2l-8 8" stroke="#fff" stroke-width="1.6" fill="none"/></svg><div class="sep"></div></div>
<div class="tab" style="left:684.00px;"><svg class="fv" viewBox="0 0 16 16"><circle cx="8" cy="8" r="7" fill="none" stroke="#111" stroke-width="1.6"/><path d="M8 3.5l3.5 4.5L8 12.5 4.5 8z" fill="none" stroke="#111" stroke-width="1.3"/><path d="M3 13h10" stroke="#111" stroke-width="1.3"/></svg><div class="ti">World Cities Day 2020</div><svg class="cl" viewBox="0 0 12 12"><path d="M2 2l8 8M10 2l-8 8" stroke="#fff" stroke-width="1.6" fill="none"/></svg><div class="sep"></div></div>
<div class="tab" style="left:852.75px;"><svg class="fv" viewBox="0 0 16 16"><path d="M8 0.5C5 0.5 3 2.7 3 5.5c0 3.5 5 10 5 10s5-6.500 5-10c0-2.800-2-5-5-5z" fill="#ea4335"/><path d="M8 .5C5 .5 3 2.700 3 5.500c0 1 .5 2.300 1.200 3.600L8 5.500z" fill="#4285f4"/><path d="M8 15.500s5-6.500 5-10L8 5.500 4.200 9.100C5.700 12 8 15.500 8 15.500z" fill="#34a853"/><path d="M8 .5v5l4-3.200C11.100 1.200 9.700 .5 8 .5z" fill="#fbbc04"/><circle cx="8" cy="5.500" r="1.800" fill="#fff"/></svg><div class="ti">Ayutthaya - Google M</div><svg class="cl" viewBox="0 0 12 12"><path d="M2 2l8 8M10 2l-8 8" stroke="#fff" stroke-width="1.6" fill="none"/></svg><div class="sep"></div></div>
<div class="tab" style="left:1021.50px;"><svg class="fv" viewBox="0 0 16 16"><rect width="16" height="16" fill="#fff"/><rect x="1" y="1" width="14" height="10" fill="#3a7d44"/><rect x="3" y="3" width="4" height="6" fill="#f2c037"/><rect x="9" y="2" width="4" height="7" fill="#4a90d9"/><rect x="1" y="11" width="14" height="4" fill="#2a4d8f"/></svg><div class="ti">Cities and National C</div><svg class="cl" viewBox="0 0 12 12"><path d="M2 2l8 8M10 2l-8 8" stroke="#fff" stroke-width="1.6" fill="none"/></svg><div class="sep"></div></div>
<div class="tab" style="left:1190.25px;"><svg class="fv" viewBox="0 0 16 16"><rect x="1" y="2" width="14" height="12" fill="#17509e"/><circle cx="6" cy="10" r="1" fill="#fc0"/><circle cx="9" cy="7" r="1" fill="#fc0"/><circle cx="10" cy="11" r="1" fill="#6c3"/><circle cx="6" cy="6" r=".8" fill="#6c3"/></svg><div class="ti">News – International</div><svg class="cl" viewBox="0 0 12 12"><path d="M2 2l8 8M10 2l-8 8" stroke="#fff" stroke-width="1.6" fill="none"/></svg><div class="sep"></div></div>
<div class="tab" style="left:1359.00px;"><svg class="fv" viewBox="0 0 16 16"><rect width="16" height="16" rx="3" fill="#ffd02f"/><path d="M10.900 3H9.200l1.400 2.500L7.500 3H5.800l1.500 3L4.100 3H2.400l1.700 3.900L2.400 13h1.700l3.200-8.300L5.800 13h1.700l3.100-7.900L9.200 13h1.700l3.100-8.800z" fill="#050038"/></svg><div class="ti">Miro | Online Whiteb</div><svg class="cl" viewBox="0 0 12 12"><path d="M2 2l8 8M10 2l-8 8" stroke="#fff" stroke-width="1.6" fill="none"/></svg></div>
<div class="tab act" style="left:1527.75px;width:170px;"><svg class="fv" viewBox="0 0 16 16"><rect width="16" height="16" rx="3" fill="#ffd02f"/><path d="M10.900 3H9.200l1.400 2.500L7.500 3H5.800l1.500 3L4.100 3H2.400l1.700 3.900L2.400 13h1.700l3.200-8.300L5.800 13h1.700l3.100-7.900L9.200 13h1.700l3.100-8.800z" fill="#050038"/></svg><div class="ti">EGM on Vertical Integ</div><svg class="cl" viewBox="0 0 12 12"><path d="M2 2l8 8M10 2l-8 8" stroke="#3c4043" stroke-width="1.6" fill="none"/></svg></div>
<svg class="abs" style="left:1711px;top:9px" width="16" height="16" viewBox="0 0 16 16"><path d="M8 2v12M2 8h12" stroke="#fff" stroke-width="2"/></svg>
<svg class="abs" style="left:1799px;top:6px" width="12" height="20" viewBox="0 0 12 20"><path d="M0 8.500h11" stroke="#fff" stroke-width="1"/></svg>
<svg class="abs" style="left:1845px;top:8px" width="12" height="12" viewBox="0 0 12 12"><path d="M.5 3.500h7.500v7.500H.5zM3 3.500V1h8v8H8" stroke="#fff" stroke-width="1" fill="none"/></svg>
<svg class="abs" style="left:1891px;top:8px" width="12" height="12" viewBox="0 0 12 12"><path d="M.5 .5l11 11M11.500 .5l-11 11" stroke="#fff" stroke-width="1.200" fill="none"/></svg>
</div>
<div id="tbar"><div id="pill"></div><svg class="abs" style="left:14px;top:10px" width="16" height="16" viewBox="0 0 16 16"><path d="M15 8H2.500M8 2L2 8l6 6" stroke="#5f6368" stroke-width="1.800" fill="none"/></svg><svg class="abs" style="left:46px;top:10px" width="16" height="16" viewBox="0 0 16 16"><path d="M1 8h12.500M8 2l6 6-6 6" stroke="#c4c7ca" stroke-width="1.800" fill="none"/></svg><svg class="abs" style="left:78px;top:10px" width="16" height="16" viewBox="0 0 16 16"><path d="M13.500 8A5.500 5.500 0 1 1 11.900 4.100" stroke="#5f6368" stroke-width="1.800" fill="none"/><path d="M14.500 1v5.500H9z" fill="#5f6368"/></svg><svg class="abs" style="left:121px;top:11px" width="10" height="13" viewBox="0 0 10 13"><rect x="0.500" y="5" width="9" height="7.500" rx="1" fill="#5f6368"/><path d="M2.500 5V3.500a2.500 2.500 0 0 1 5 0V5" stroke="#5f6368" stroke-width="1.400" fill="none"/></svg><div id="url">miro.com<span>/app/board/o9J_kiKkMDo=/</span></div><svg class="abs" style="left:1690px;top:10px" width="16" height="16" viewBox="0 0 16 16"><path d="M8 1.500l2 4.300 4.700.5-3.500 3.200 1 4.700L8 11.800l-4.200 2.400 1-4.700L1.300 6.300l4.700-.5z" stroke="#5f6368" stroke-width="1.400" fill="none" stroke-linejoin="round"/></svg><svg class="abs" style="left:1727px;top:9px" width="24" height="24" viewBox="0 0 24 24"><path d="M4.500 4.500l5.500-2 5.500 2c0 5-1.500 8-5.500 11-4-3-5.500-6-5.500-11z" fill="#fff" stroke="#e01b2f" stroke-width="2.200" stroke-linejoin="round"/><rect x="11" y="12" width="11" height="11" rx="2" fill="#5bb32a"/><text x="16.500" y="21" font-size="9.500" font-weight="bold" fill="#fff" text-anchor="middle" font-family="Liberation Sans">3</text></svg><svg class="abs" style="left:1762px;top:10px" width="16" height="16" viewBox="0 0 16 16"><circle cx="8" cy="8" r="6.500" fill="#d8d8d8" stroke="#6a6a6a" stroke-width="2"/><path d="M3 11a6 6 0 0 0 10-1c-3 2-7 2-10 1z" fill="#6a6a6a"/></svg><svg class="abs" style="left:1793px;top:9px" width="18" height="18" viewBox="0 0 18 18"><circle cx="9" cy="9" r="8.500" fill="#15c39a"/><path d="M12.500 6.500A4.200 4.200 0 1 0 13.200 10H9.800" stroke="#fff" stroke-width="1.700" fill="none"/></svg><svg class="abs" style="left:1825px;top:9px" width="18" height="18" viewBox="0 0 18 18"><path d="M7 2.500a1.800 1.800 0 0 1 3.600 0V4H14a1 1 0 0 1 1 1v3.200h-1.300a1.900 1.900 0 0 0 0 3.800H15V15a1 1 0 0 1-1 1h-3.200v-1.300a1.900 1.900 0 0 0-3.800 0V16H4a1 1 0 0 1-1-1v-3.400h1.200a1.800 1.800 0 0 0 0-3.600H3V5a1 1 0 0 1 1-1h3z" fill="#5f6368"/></svg><div class="abs" style="left:1854px;top:6px;width:24px;height:24px;border-radius:12px;background:radial-gradient(circle at 50% 35%,#c9a58a 0,#c9a58a 22%,#3a3f4a 30%,#4b5563 60%,#8aa0b8 100%);overflow:hidden"><div class="abs" style="left:2px;top:15px;width:20px;height:10px;background:#2b3040"></div><div class="abs" style="left:4px;top:18px;width:8px;height:5px;background:#3b82c4"></div></div><svg class="abs" style="left:1896px;top:10px" width="4" height="16" viewBox="0 0 4 16"><circle cx="2" cy="2" r="1.600" fill="#5f6368"/><circle cx="2" cy="8" r="1.600" fill="#5f6368"/><circle cx="2" cy="14" r="1.600" fill="#5f6368"/></svg></div>
<div id="bm"><svg class="i" style="left:15px" viewBox="0 0 16 16"><g transform="translate(0 1)"><rect x="0" y="0" width="3" height="3" fill="#ea4335"/><rect x="5" y="0" width="3" height="3" fill="#ea4335"/><rect x="10" y="0" width="3" height="3" fill="#ea4335"/><rect x="0" y="5" width="3" height="3" fill="#34a853"/><rect x="5" y="5" width="3" height="3" fill="#4285f4"/><rect x="10" y="5" width="3" height="3" fill="#fbbc04"/><rect x="0" y="10" width="3" height="3" fill="#34a853"/><rect x="5" y="10" width="3" height="3" fill="#fbbc04"/><rect x="10" y="10" width="3" height="3" fill="#fbbc04"/></g></svg><div class="b" style="left:38px">Apps</div><svg class="i" style="left:81px" viewBox="0 0 16 16"><path d="M0 12c1-4 3-8 5-8s2 3 3 3 1-3 3-3 4 4 5 8c-2 1-4 0-5-2-1 2-2 2-3 2s-2 0-3-2c-1 2-3 3-5 2z" fill="#333"/></svg><div class="b" style="left:105px">Matomo</div><svg class="i" style="left:167px" viewBox="0 0 16 16"><circle cx="8" cy="8" r="7.500" fill="#5f6368"/><path d="M2.500 5.500c2-.5 3.500.5 4 2s-.5 2.500 1 3 2 2 1.200 4.300A7 7 0 0 1 1.200 8c0-1 .5-2 1.300-2.500zM9 1c2.500.2 4.500 1.800 5.300 4-1.300 1.200-3.300 1.200-4.300.2S8 3 9 1z" fill="#fff"/></svg><svg class="i" style="left:199px" viewBox="0 0 16 16"><path d="M8 0.500l2.300 5 5.400.6-4 3.700 1.100 5.400L8 12.500l-4.800 2.700 1.100-5.400-4-3.700 5.400-.6z" fill="#1a73e8"/></svg><div class="b" style="left:223px">Bookmarks</div><svg class="i" style="left:298px" viewBox="0 0 16 16"><path d="M8 1l7 4v6l-7 4-7-4V5z" fill="#e8eaed"/><path d="M1 5l7 4v6l-7-4z" fill="#2b3a4a"/><path d="M15 5l-7 4v6l7-4z" fill="#37a3e6"/></svg><div class="b" style="left:322px">IUC ASIA Roundcub...</div><svg class="i" style="left:452px" viewBox="0 0 16 16"><circle cx="8" cy="8" r="7.500" fill="#0a78c2"/><circle cx="8" cy="8" r="5" fill="#fff"/><path d="M8 3a5 5 0 0 1 5 5H8z" fill="#6ebe44"/><circle cx="8" cy="8" r="2.800" fill="#fff"/></svg><div class="b" style="left:476px">Cisco Webex Meeti...</div><svg class="i" style="left:606px" viewBox="0 0 16 16"><circle cx="8" cy="8" r="7.500" fill="#5f6368"/><path d="M2.500 5.500c2-.5 3.500.5 4 2s-.5 2.500 1 3 2 2 1.200 4.300A7 7 0 0 1 1.200 8c0-1 .5-2 1.300-2.500zM9 1c2.500.2 4.500 1.800 5.300 4-1.300 1.200-3.300 1.200-4.300.2S8 3 9 1z" fill="#fff"/></svg><div class="b" style="left:630px">KONICA MINOLTA...</div><svg class="i" style="left:760px" viewBox="0 0 16 16"><path d="M1 15V6h4v9M5 15V9h4v6M9 15V2l5-1v14" fill="none" stroke="#1a4f9c" stroke-width="1.600"/></svg><div class="b" style="left:784px">IUC Cloud</div><svg class="i" style="left:854px" viewBox="0 0 16 16"><path d="M5 5a3 3 0 1 0 0 6c2 0 4-6 6-6a3 3 0 1 1 0 6C9 11 7 5 5 5z" fill="none" stroke="#3b7ddd" stroke-width="2"/></svg><div class="b" style="left:878px">Greening the Econo...</div><svg class="i" style="left:1008px" viewBox="0 0 16 16"><circle cx="8" cy="8" r="7.500" fill="#5f6368"/><path d="M2.500 5.500c2-.5 3.500.5 4 2s-.5 2.500 1 3 2 2 1.200 4.300A7 7 0 0 1 1.200 8c0-1 .5-2 1.300-2.500zM9 1c2.500.2 4.500 1.800 5.300 4-1.300 1.200-3.300 1.200-4.300.2S8 3 9 1z" fill="#fff"/></svg><div class="b" style="left:1032px">european smart citi...</div><svg class="i" style="left:1162px" viewBox="0 0 16 16"><rect x="0" y="1" width="16" height="14" rx="1" fill="#a43"/><rect x="0" y="4" width="16" height="3" fill="#f90"/><rect x="0" y="7" width="16" height="3" fill="#fd5"/><rect x="2" y="10" width="12" height="3" fill="#fff"/></svg><div class="b" style="left:1186px">World's Air Pollutio...</div><svg class="i" style="left:1316px" viewBox="0 0 16 16"><rect x="0" y="2" width="16" height="12" fill="#003399"/><circle cx="8" cy="8" r="3.600" fill="none" stroke="#fc0" stroke-width="1.300" stroke-dasharray="1.200 1.100"/></svg><div class="b" style="left:1340px">Online Services - O...</div><svg class="i" style="left:1470px" viewBox="0 0 16 16"><path d="M2 2h12v4h-1.500c0-1.500-1-2.200-2.700-2.200V13c0 .8.600 1 2 1v1H4.200v-1c1.400 0 2-.2 2-1V3.800C4.500 3.800 3.500 4.500 3.500 6H2z" fill="#e20074"/><rect x="2" y="8" width="2.500" height="2.500" fill="#e20074"/><rect x="11.500" y="8" width="2.500" height="2.500" fill="#e20074"/></svg><div class="b" style="left:1494px">Speedport W 724V...</div><div class="b" style="left:1743px;font-size:14px;color:#5f6368;font-weight:bold;letter-spacing:-1px">»</div><div class="abs" style="left:1763px;top:7px;width:1px;height:15px;background:#c8cacf"></div><svg class="i" style="left:1773px" viewBox="0 0 16 16"><path d="M2 1h10a1 1 0 0 1 1 1v13H2z" fill="#fbd969"/><path d="M11 11h3v4h-3z" fill="#fbd969" stroke="#e8b93c" stroke-width=".600"/></svg><div class="b" style="left:1798px">Weitere Lesezeichen</div></div>
<div id="banner"><div class="t">Access your boards faster by <u>installing the Miro app</u> on your device.</div><svg class="abs" style="left:1888px;top:14px" width="14" height="14" viewBox="0 0 14 14"><path d="M1 1l12 12M13 1L1 13" stroke="#fff" stroke-width="1.500"/></svg></div>
<div id="task"><div class="abs" style="left:735px;top:0;width:48px;height:40px;background:#0e4573"></div><svg class="tk" style="left:12px" viewBox="0 0 24 24"><path d="M4 6.200l7-1v6.300H4zM12 5l8-1.200v7.700h-8zM4 12.500h7v6.300l-7-1zM12 12.500h8v7.700L12 19z" fill="#fff"/></svg><svg class="tk" style="left:60px" viewBox="0 0 24 24"><circle cx="14.500" cy="9.500" r="5.300" fill="none" stroke="#fff" stroke-width="1.200"/><path d="M10.500 13.500L4 20" stroke="#fff" stroke-width="1.500"/></svg><svg class="tk" style="left:108px" viewBox="0 0 24 24"><circle cx="12" cy="12" r="6.800" fill="none" stroke="#fff" stroke-width="1.700"/></svg><svg class="tk" style="left:159px" viewBox="0 0 24 24"><path d="M3 7h18v14H3z" fill="#f3f3f3"/><path d="M8 7V4.500a4 4 0 0 1 8 0V7" fill="none" stroke="#ddd" stroke-width="1.200"/><rect x="8" y="10" width="3.500" height="3.500" fill="#f25022"/><rect x="12.500" y="10" width="3.500" height="3.500" fill="#7fba00"/><rect x="8" y="14.500" width="3.500" height="3.500" fill="#00a4ef"/><rect x="12.500" y="14.500" width="3.500" height="3.500" fill="#ffb900"/></svg><svg class="tk" style="left:208px" viewBox="0 0 24 24"><path d="M6 3h12l1 10H5z" fill="#e8e8e8"/><path d="M2 13h20v6H2z" fill="#9aa0a8"/><path d="M4 19h5v2H4zM15 19h5v2h-5z" fill="#c9a25a"/><path d="M8 6h8M8 9h8" stroke="#888" stroke-width="1"/></svg><svg class="tk" style="left:257px" viewBox="0 0 24 24"><ellipse cx="11" cy="10" rx="10" ry="7" fill="#e9e9ee" stroke="#c33" stroke-width="1.500"/><path d="M8 8l10 12M16 8L8 20" stroke="#3b8fd6" stroke-width="1.600"/><circle cx="8" cy="20" r="1.800" fill="none" stroke="#3b8fd6" stroke-width="1.200"/><circle cx="18" cy="20" r="1.800" fill="none" stroke="#3b8fd6" stroke-width="1.200"/></svg><svg class="tk" style="left:306px" viewBox="0 0 24 24"><rect x="8" y="3" width="14" height="18" rx="1.500" fill="#21a366"/><rect x="15" y="3" width="7" height="9" fill="#33c481"/><rect x="15" y="12" width="7" height="9" fill="#107c41"/><rect x="0" y="6" width="12.500" height="12.500" rx="1.500" fill="#107c41"/><path d="M3.700 9.200l5 6M8.700 9.200l-5 6" stroke="#fff" stroke-width="1.800"/></svg><svg class="tk" style="left:355px" viewBox="0 0 24 24"><circle cx="12" cy="12" r="11" fill="#0082c9"/><circle cx="5.500" cy="12" r="2.200" fill="none" stroke="#fff" stroke-width="1.500"/><circle cx="12" cy="12" r="3.200" fill="none" stroke="#fff" stroke-width="1.700"/><circle cx="18.500" cy="12" r="2.200" fill="none" stroke="#fff" stroke-width="1.500"/></svg><svg class="tk" style="left:404px" viewBox="0 0 24 24"><rect x="9" y="3" width="13" height="15" rx="1.500" fill="#1490df"/><path d="M9 12l6.500 4 6.500-4v8a1 1 0 0 1-1 1H10a1 1 0 0 1-1-1z" fill="#28a8ea"/><rect x="0" y="6" width="12" height="12" rx="1.500" fill="#0364b8"/><ellipse cx="6" cy="12" rx="2.700" ry="3.100" fill="none" stroke="#fff" stroke-width="1.700"/></svg><svg class="tk" style="left:453px" viewBox="0 0 24 24"><circle cx="12" cy="12" r="10.500" fill="#1b9de2"/><path d="M3 15c0-6 4-9 9-9 5 0 9 3 9 7h-12c0 3 3 5 8 3-2 4-7 5-10 3-2-1-4-2-4-4z" fill="#35c1f1"/><path d="M2 13c2-6 8-9 13-6-5-1-9 2-9 6 0 4 4 7 8 6-5 3-11 0-12-6z" fill="#0c59a4"/><path d="M20 17c-3 4-9 5-13 2 4 2 9 0 10-3z" fill="#7bd44a"/></svg><svg class="tk" style="left:502px" viewBox="0 0 24 24"><circle cx="12" cy="13" r="9.500" fill="#ff9500"/><path d="M12 3c4 0 9 3 9 9 0-3-2-5-4-5 1 2 0 4-1 4-1-3-4-4-4-8z" fill="#ffcb00"/><circle cx="12" cy="14" r="5.500" fill="#7542e5"/><path d="M3 9c2-4 5-5 6-7 0 3 2 4 4 5-3 0-5 2-5 5s3 5 6 4c-4 4-12 1-11-7z" fill="#ff4f1a"/></svg><svg class="tk" style="left:551px" viewBox="0 0 24 24"><rect x="8" y="3" width="14" height="18" rx="1.500" fill="#41a5ee"/><rect x="8" y="12" width="14" height="4.500" fill="#2b7cd3"/><rect x="8" y="16.500" width="14" height="4.500" fill="#185abd"/><rect x="0" y="6" width="12.500" height="12.500" rx="1.500" fill="#185abd"/><path d="M2.500 9.200l1.800 6 1.900-5 1.900 5 1.800-6" stroke="#fff" stroke-width="1.500" fill="none"/></svg><svg class="tk" style="left:600px" viewBox="0 0 24 24"><rect x="0" y="0" width="24" height="24" fill="#09b83e"/><ellipse cx="9.500" cy="10" rx="6" ry="5" fill="#fff"/><ellipse cx="15.500" cy="14.500" rx="5" ry="4" fill="#e6f7ea"/></svg><svg class="tk" style="left:649px" viewBox="0 0 24 24"><rect x="0" y="0" width="24" height="24" rx="4" fill="#ffe812"/><ellipse cx="12" cy="11" rx="8.500" ry="6.500" fill="#3c1e1e"/><path d="M8 16l-1 4 4-3z" fill="#3c1e1e"/><text x="12" y="13" font-size="5" font-weight="bold" fill="#ffe812" text-anchor="middle" font-family="Liberation Sans">TALK</text></svg><svg class="tk" style="left:698px" viewBox="0 0 24 24"><path d="M1 5h8l2 2h12v13H1z" fill="#ffd45e"/><path d="M1 9h22v11H1z" fill="#f7b92c"/><rect x="7" y="13" width="10" height="7" fill="#3b95e0"/></svg><svg class="tk" style="left:747px" viewBox="0 0 24 24"><circle cx="12" cy="12" r="11" fill="#fff"/><path d="M12 1a11 11 0 0 1 9.500 5.500H12a5.500 5.500 0 0 0-4.800 2.800L3.400 5.200A11 11 0 0 1 12 1z" fill="#ea4335"/><path d="M21.500 6.500A11 11 0 0 1 11 23l5.800-8.200A5.500 5.500 0 0 0 17 6.500z" fill="#fbbc04"/><path d="M11 23A11 11 0 0 1 3.400 5.200l3.800 6.600a5.500 5.500 0 0 0 6.300 5.500z" fill="#34a853"/><circle cx="12" cy="12" r="4.300" fill="#4285f4" stroke="#fff" stroke-width="1.400"/></svg><svg class="tk" style="left:796px" viewBox="0 0 24 24"><path d="M5 2h10l5 5v15H5z" fill="#fafafa"/><path d="M15 2v5h5z" fill="#d0d0d0"/></svg><svg class="tk" style="left:845px" viewBox="0 0 24 24"><circle cx="10" cy="10" r="8.500" fill="#2f7fd6"/><path d="M4 8c2-3 5-4 7-3s1 4 3 4 3 2 2 5-5 4-8 3-5-5-4-9z" fill="#5bb85b"/><path d="M12 12h10v10H12z" fill="#e8e8ee"/><path d="M14 14h8v8h-8z" fill="#cfd3da"/></svg><svg class="tk" style="left:894px" viewBox="0 0 24 24"><path d="M3 2h9l3 3v17H3z" fill="#f9c846"/><path d="M3 2h4v20H3z" fill="#e7a62a"/><path d="M10 21a3.500 3.500 0 0 1 1-6.800 4.500 4.500 0 0 1 8.500 1A3 3 0 0 1 19 21z" fill="#2a7de1"/></svg><svg class="tk" style="left:943px" viewBox="0 0 24 24"><ellipse cx="10" cy="14" rx="9" ry="8" fill="#c7ccd6"/><circle cx="6" cy="12" r="1.800" fill="#e33"/><circle cx="10" cy="9.500" r="1.800" fill="#3a3"/><circle cx="14" cy="12" r="1.800" fill="#36c"/><circle cx="8" cy="17" r="1.800" fill="#fc3"/><path d="M13 18L22 3" stroke="#d9a441" stroke-width="2.200"/><path d="M20.500 2l2.500 1.500-1.500 3z" fill="#b5651d"/></svg><svg class="tk" style="left:992px" viewBox="0 0 24 24"><rect x="0" y="0" width="24" height="24" fill="#1565c0"/><circle cx="12" cy="11" r="7.500" fill="#25d366"/><path d="M6 19l1.500-4.500" stroke="#25d366" stroke-width="2"/><path d="M9 8c0 4 3 6.500 6 7" stroke="#fff" stroke-width="1.800" fill="none"/><circle cx="18" cy="18" r="6.500" fill="#e8112d"/><text x="18" y="21.500" font-size="10" font-weight="bold" fill="#fff" text-anchor="middle" font-family="Liberation Sans">1</text></svg><svg class="tk" style="left:1041px" viewBox="0 0 24 24"><circle cx="12" cy="12" r="10.500" fill="#00aff0"/><path d="M15.500 8.500c-1-1.500-5.500-1.800-5.500 1s6 1.500 6 4.500-5.500 3-7 .8" stroke="#fff" stroke-width="2.200" fill="none" stroke-linecap="round"/></svg><svg class="tk" style="left:1090px" viewBox="0 0 24 24"><rect x="0" y="0" width="24" height="24" rx="3" fill="#c9252d"/><text x="9" y="9.500" font-size="7" font-weight="bold" fill="#fff" text-anchor="middle" font-family="Liberation Sans">PDF</text><path d="M5 20L19 9l3 3L8 22z" fill="#fff"/><path d="M3 17l12-8" stroke="#fff" stroke-width="1.200"/></svg><svg class="tk" style="left:1139px" viewBox="0 0 24 24"><rect x="1" y="1" width="22" height="22" rx="2" fill="#1e88e5"/><path d="M1 20L10 9l8 11zM12 20l5-6 6 7z" fill="#1a4fa0"/><circle cx="17" cy="7" r="2" fill="#fff"/></svg><svg class="tk" style="left:1188px" viewBox="0 0 24 24"><circle cx="14" cy="12" r="10" fill="#ed6c47"/><path d="M14 2a10 10 0 0 1 10 10H14z" fill="#ff8f6b"/><rect x="0" y="6" width="12.500" height="12.500" rx="1.500" fill="#c43e1c"/><path d="M4.300 15.500V9.300h2.900a2.050 2.050 0 0 1 0 4.100H4.300" stroke="#fff" stroke-width="1.600" fill="none"/></svg><div class="ul" style="left:200.0px;width:40px"></div><div class="ul" style="left:396.0px;width:40px"></div><div class="ul" style="left:543.0px;width:40px"></div><div class="ul" style="left:592.0px;width:40px"></div><div class="ul" style="left:690.0px;width:40px"></div><div class="ul" style="left:735.0px;width:48px"></div><div class="ul" style="left:984.0px;width:40px"></div><div class="ul" style="left:1033.0px;width:40px"></div><div class="ul" style="left:1082.0px;width:40px"></div><div class="ul" style="left:1131.0px;width:40px"></div><div class="ul" style="left:1180.0px;width:40px"></div><svg class="abs" style="left:1678px;top:14px" width="14" height="10" viewBox="0 0 14 10"><path d="M1.500 8.500L7 2.500l5.500 6" stroke="#fff" stroke-width="1.400" fill="none"/></svg><svg class="abs" style="left:1708px;top:12px" width="18" height="16" viewBox="0 0 18 16"><path d="M5.500 2.500h11v8h-11zM8 13.500h6M11 10.500v3M1.500 1.500h4v12h-4zM1.500 4.500h4" stroke="#fff" stroke-width="1.100" fill="none"/></svg><svg class="abs" style="left:1740px;top:12px" width="18" height="16" viewBox="0 0 18 16"><path d="M1.500 5.500h3l4-3.500v12l-4-3.500h-3z" stroke="#fff" stroke-width="1.100" fill="none"/><path d="M10.500 5.500a3.500 3.500 0 0 1 0 5M12.500 3.500a6 6 0 0 1 0 9M14.500 1.500a9 9 0 0 1 0 13" stroke="#fff" stroke-width="1" fill="none"/></svg><div class="abs" style="left:1772px;top:0;height:40px;line-height:39px;font-size:11.400px;color:#fff">DEU</div><div class="abs" style="left:1798px;top:1.500px;width:70px;text-align:center;font-size:11.600px;line-height:17.500px;color:#fff;letter-spacing:-.15px">18:02<br>30.10.2020</div><svg class="abs" style="left:1878px;top:11px" width="18" height="18" viewBox="0 0 18 18"><path d="M1.500 1.500h15v11h-6l-2 2.500-2-2.500h-5z" stroke="#fff" stroke-width="1.200" fill="none"/></svg><div class="abs" style="left:1915px;top:0;width:1px;height:40px;background:#5a6d82"></div></div>
</div>
</body></html>
